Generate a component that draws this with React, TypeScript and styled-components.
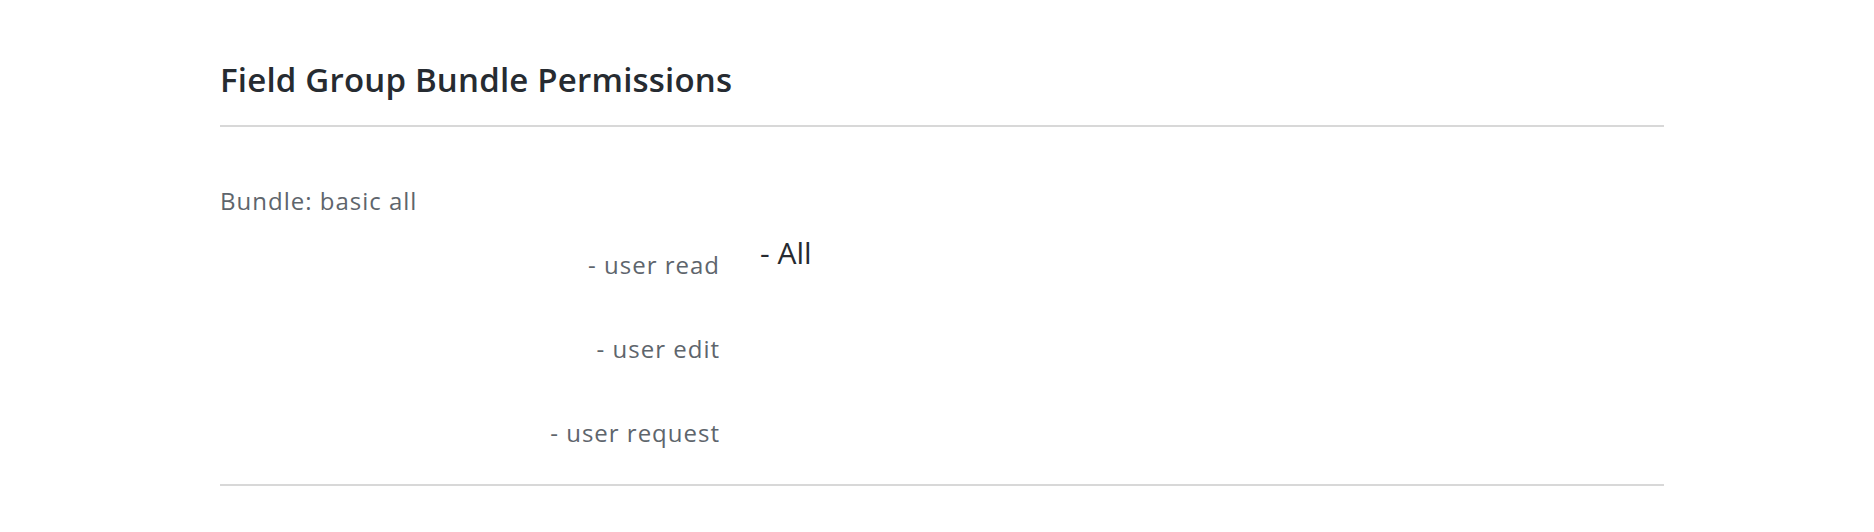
import React from 'react';
import styled, {createGlobalStyle} from 'styled-components';

const GlobalStyle = createGlobalStyle`
  body {
    margin: 0;
    background: #ffffff;
    font-family: "Open Sans", "Liberation Sans", sans-serif;
  }
`;

const Container = styled.div`
  width: 1444px;
  margin-left: 220px;
  padding-top: 56px;
`;

const Title = styled.h2`
  margin: 0;
  font-size: 33px;
  line-height: 48px;
  font-weight: 600;
  letter-spacing: 0.2px;
  color: #262b31;
  padding-bottom: 21px;
  border-bottom: 2px solid #d8d8d8;
`;

const Section = styled.section`
  padding-top: 58px;
  border-bottom: 2px solid #d8d8d8;
`;

const BundleName = styled.div`
  font-size: 24px;
  line-height: 32px;
  letter-spacing: 1px;
  color: #5e656c;
`;

const Grid = styled.div`
  display: grid;
  grid-template-columns: 500px 1fr;
  grid-auto-rows: 84px;
  column-gap: 40px;
  margin-top: 18px;
  margin-bottom: -3px;
`;

const Label = styled.div`
  text-align: right;
  font-size: 24px;
  line-height: 32px;
  letter-spacing: 1px;
  padding-top: 14px;
  color: #5e656c;
`;

const Value = styled.div`
  font-size: 30px;
  line-height: 36px;
  color: #262b31;
`;

interface IPermission {
    name: string;
    value?: string;
}

const permissions: IPermission[] = [
    {name: 'user read', value: 'All'},
    {name: 'user edit'},
    {name: 'user request'},
];

const App = () => {
    return <>
        <GlobalStyle/>
        <Container>
            <Title>Field Group Bundle Permissions</Title>
            <Section>
                <BundleName>Bundle: basic all</BundleName>
                <Grid>
                    {permissions.map((p) => (
                        <React.Fragment key={p.name}>
                            <Label>- {p.name}</Label>
                            <Value>{p.value ? `- ${p.value}` : ''}</Value>
                        </React.Fragment>
                    ))}
                </Grid>
            </Section>
        </Container>
    </>;
};

export default App;
